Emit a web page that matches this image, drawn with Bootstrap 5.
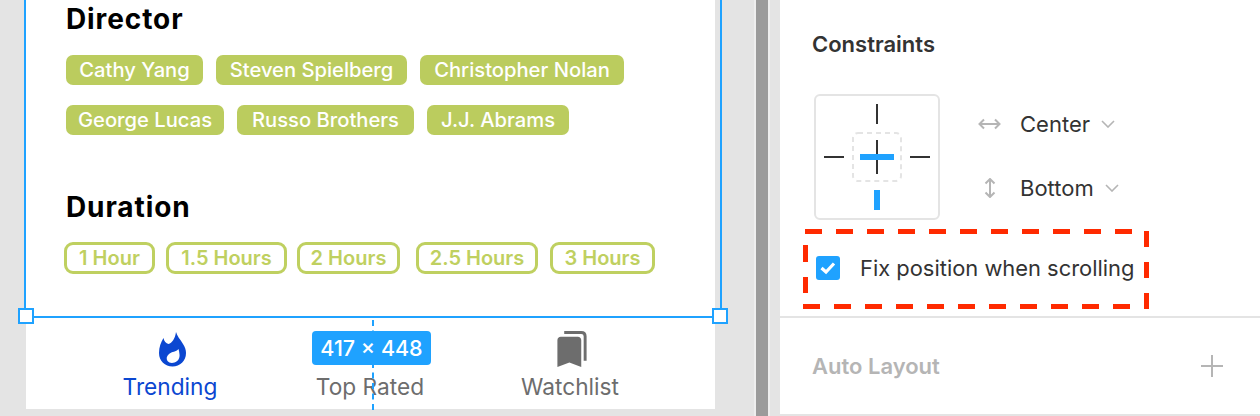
<!doctype html>
<html lang="en">
<head>
<meta charset="utf-8">
<title>Constraints</title>
<link href="https://cdn.jsdelivr.net/npm/bootstrap@5.3.0/dist/css/bootstrap.min.css" rel="stylesheet">
<style>
html,body{height:416px;overflow:hidden;background:#e4e4e4;font-family:Inter,"Liberation Sans",sans-serif}
.stage{height:416px;position:relative}
.canvas-col{width:754px;flex:none;position:relative;padding-left:26px}
.artboard{width:689px;height:409px;background:#fff}
.art-body{height:318px;padding-left:40px}
.head-txt{font-size:28px;font-weight:700;letter-spacing:.9px;color:#000;line-height:34px;margin:0}
.head-dir{margin-top:2px;margin-bottom:19px}
.head-dur{margin-top:55px;margin-bottom:18px}
.tag-row{margin-bottom:20px;gap:13px}
.tagf{background:#bbcc5e;color:#fff;font-size:20.200px;font-weight:500;height:30px;line-height:30px;border-radius:7px;text-align:center;white-space:nowrap}
.t1{width:137px}.t2{width:191px}.t3{width:204px}.t4{width:158px}.t5{width:177px}.t6{width:142px}
.tago{border:3px solid #bfd060;color:#bfd060;font-size:20px;font-weight:600;height:32px;line-height:26px;border-radius:9px;text-align:center;white-space:nowrap}
.dur-row{margin-left:-2px}
.w1{width:91px}.w2{width:121px;margin-left:11px}.w3{width:103px;margin-left:10px}.w4{width:122px;margin-left:16px}.w5{width:105px;margin-left:12px}
.tabs{padding-left:44px;padding-top:13px}
.tabitem{width:200px;color:#6d6d6d;font-size:22.700px;line-height:30px}
.tabitem svg{display:block;height:36px;margin-bottom:5px}
.tab-on{color:#0b47d1}
.tabitem .ic-fire{margin-left:5px}
.tabitem .ic-mark{margin-left:4px}
.frame{position:absolute;left:24px;top:-4px;width:698px;height:322px;border:2px solid #1fa2ff;pointer-events:none}
.handle{position:absolute;width:16px;height:16px;background:#fff;border:2px solid #1fa2ff}
.hl{left:18px;top:308px}.hr{left:712px;top:308px}
.dim-badge{position:absolute;left:312px;top:331px;width:119px;height:34px;background:#1fa2ff;color:#fff;border-radius:4px;font-size:21.500px;font-weight:500;line-height:34px;text-align:center}
.dim-line{position:absolute;left:372px;top:320px;height:90px;border-left:2px dashed #1fa2ff}
.bar-split{width:16px;flex:none;background:#9b9b9b;border-left:2px solid #eee;border-right:2px solid #eee}
.side-gap{width:10px;flex:none}
.side{width:480px;flex:none;background:#fff;height:416px}
.sec-a{height:318px;border-bottom:2px solid #e4e4e4;padding:29px 0 0 32px;position:relative}
.sec-b{height:98px;border-bottom:2px solid #e4e4e4;padding:0 37px 0 32px}
.sec-title{font-size:22px;font-weight:600;color:#333;line-height:30px;margin:0}
.pin-grid{margin-top:35px;margin-left:2px;gap:38px}
.pin-box{width:126px;height:126px;flex:none;display:block}
.pin-rows{gap:28px;margin-top:12px;width:200px}
.pin-row{height:36px;color:#333;font-size:22px;line-height:36px}
.pin-ic{width:24px;margin-right:18px;flex:none}
.cv{margin-left:11px}
.chk-row{margin-top:36px;margin-left:4px;height:24px}
.chk{width:24px;height:24px;background:#1fa2ff;border-radius:3px;flex:none;margin-right:20px;display:block}
.chk-txt{font-size:21.900px;color:#333;line-height:24px;white-space:nowrap}
.auto-t{font-size:22px;font-weight:600;color:#b5b5b5;line-height:30px}
.red-box{position:absolute;left:23px;top:229px;width:346px;height:80px;pointer-events:none}
</style>
</head>
<body>
<div class="stage d-flex">
  <div class="canvas-col">
    <div class="artboard d-flex flex-column">
      <div class="art-body">
        <h2 class="head-txt head-dir">Director</h2>
        <div class="d-flex tag-row"><span class="tagf t1">Cathy Yang</span><span class="tagf t2">Steven Spielberg</span><span class="tagf t3">Christopher Nolan</span></div>
        <div class="d-flex tag-row"><span class="tagf t4">George Lucas</span><span class="tagf t5">Russo Brothers</span><span class="tagf t6">J.J. Abrams</span></div>
        <h2 class="head-txt head-dur">Duration</h2>
        <div class="d-flex dur-row">
          <span class="tago w1">1 Hour</span><span class="tago w2">1.5 Hours</span><span class="tago w3">2 Hours</span><span class="tago w4">2.5 Hours</span><span class="tago w5">3 Hours</span>
        </div>
      </div>
      <div class="d-flex tabs">
        <div class="tabitem tab-on d-flex flex-column align-items-center">
          <svg class="ic-fire" width="27" viewBox="0 0 27 36"><path fill="#0b47d1" fill-rule="evenodd" d="M17 1C18 5 21 8 24 13C26 16 27 19 27 22C27 30 21 35.500 13.500 35.500C6 35.500 0 30 0 22C0 16 2 11 4.500 7C5 10 7 12.500 9.500 13C13 12 16 8 17 1ZM19.500 18C17 21 13 20.500 10 23C7.500 25 7 28 8.500 30C10 32 13 32.500 15.500 31.500C19 30.500 21 27 20.500 23.500C20.300 21.500 20 19.500 19.500 18Z"/></svg>
          <span>Trending</span>
        </div>
        <div class="tabitem d-flex flex-column align-items-center">
          <svg width="27" viewBox="0 0 27 36"></svg>
          <span>Top Rated</span>
        </div>
        <div class="tabitem d-flex flex-column align-items-center">
          <svg class="ic-mark" width="30" viewBox="0 0 30 37"><path fill="#6d6d6d" d="M0 9.500C0 7.500 1.500 6 3.500 6H21C23 6 24.500 7.500 24.500 9.500V37L12.300 32.500L0 37Z"/><path fill="none" stroke="#6d6d6d" stroke-width="3" d="M7 1.500H24.500C27 1.500 28.500 3 28.500 5.500V30.500"/></svg>
          <span>Watchlist</span>
        </div>
      </div>
    </div>
    <div class="frame"></div>
    <div class="handle hl"></div>
    <div class="handle hr"></div>
    <div class="dim-line"></div>
    <div class="dim-badge">417 × 448</div>
  </div>
  <div class="bar-split"></div>
  <div class="side-gap"></div>
  <div class="side d-flex flex-column">
    <div class="sec-a">
      <h3 class="sec-title">Constraints</h3>
      <div class="d-flex pin-grid">
        <svg class="pin-box" width="126" height="126" viewBox="0 0 126 126">
          <rect x="1" y="1" width="124" height="124" rx="5" fill="#fff" stroke="#e4e4e4" stroke-width="2"/>
          <rect x="39" y="39" width="48" height="48" rx="5" fill="none" stroke="#e4e4e4" stroke-width="2" stroke-dasharray="5 4"/>
          <g fill="#333"><rect x="62" y="10" width="2" height="20"/><rect x="10" y="62" width="20" height="2"/><rect x="96" y="62" width="20" height="2"/><rect x="62" y="46" width="2" height="34"/></g>
          <g fill="#1fa2ff"><rect x="46" y="60" width="34" height="6"/><rect x="60" y="96" width="6" height="20"/></g>
        </svg>
        <div class="d-flex flex-column pin-rows">
          <div class="d-flex align-items-center pin-row">
            <svg class="pin-ic" width="24" height="12" viewBox="0 0 24 12"><path fill="none" stroke="#b5b5b5" stroke-width="2" d="M2 6H21M6 1.500L1.500 6L6 10.500M17 1.500L21.500 6L17 10.500"/></svg>
            <span>Center</span>
            <svg class="cv" width="14" height="8" viewBox="0 0 14 8"><path fill="none" stroke="#b5b5b5" stroke-width="1.600" d="M1 1L7 7L13 1"/></svg>
          </div>
          <div class="d-flex align-items-center pin-row">
            <svg class="pin-ic" width="24" height="20" viewBox="0 0 24 20"><path fill="none" stroke="#b5b5b5" stroke-width="2" d="M12 1V19M7.500 5.500L12 1L16.500 5.500M7.500 14.500L12 19L16.500 14.500"/></svg>
            <span>Bottom</span>
            <svg class="cv" width="14" height="8" viewBox="0 0 14 8"><path fill="none" stroke="#b5b5b5" stroke-width="1.600" d="M1 1L7 7L13 1"/></svg>
          </div>
        </div>
      </div>
      <div class="d-flex align-items-center chk-row">
        <svg class="chk" width="24" height="24" viewBox="0 0 24 24"><path fill="none" stroke="#fff" stroke-width="3.200" d="M5.500 12L10 16L18 7.500"/></svg>
        <span class="chk-txt">Fix position when scrolling</span>
      </div>
      <svg class="red-box" width="346" height="80" viewBox="0 0 346 80">
        <g fill="none" stroke="#ff2a00" stroke-width="5">
          <path stroke-dasharray="17 14" d="M2 2.500H329"/>
          <path stroke-dasharray="17 14" d="M0 77.500H346"/>
          <path stroke-dasharray="17 15" d="M2.500 16V64"/>
          <path stroke-dasharray="16 15" d="M343.500 2V80"/>
        </g>
      </svg>
    </div>
    <div class="sec-b d-flex align-items-center justify-content-between">
      <span class="auto-t">Auto Layout</span>
      <svg width="22" height="22" viewBox="0 0 22 22"><path fill="none" stroke="#b5b5b5" stroke-width="2" d="M11 0V22M0 11H22"/></svg>
    </div>
  </div>
</div>
</body>
</html>
